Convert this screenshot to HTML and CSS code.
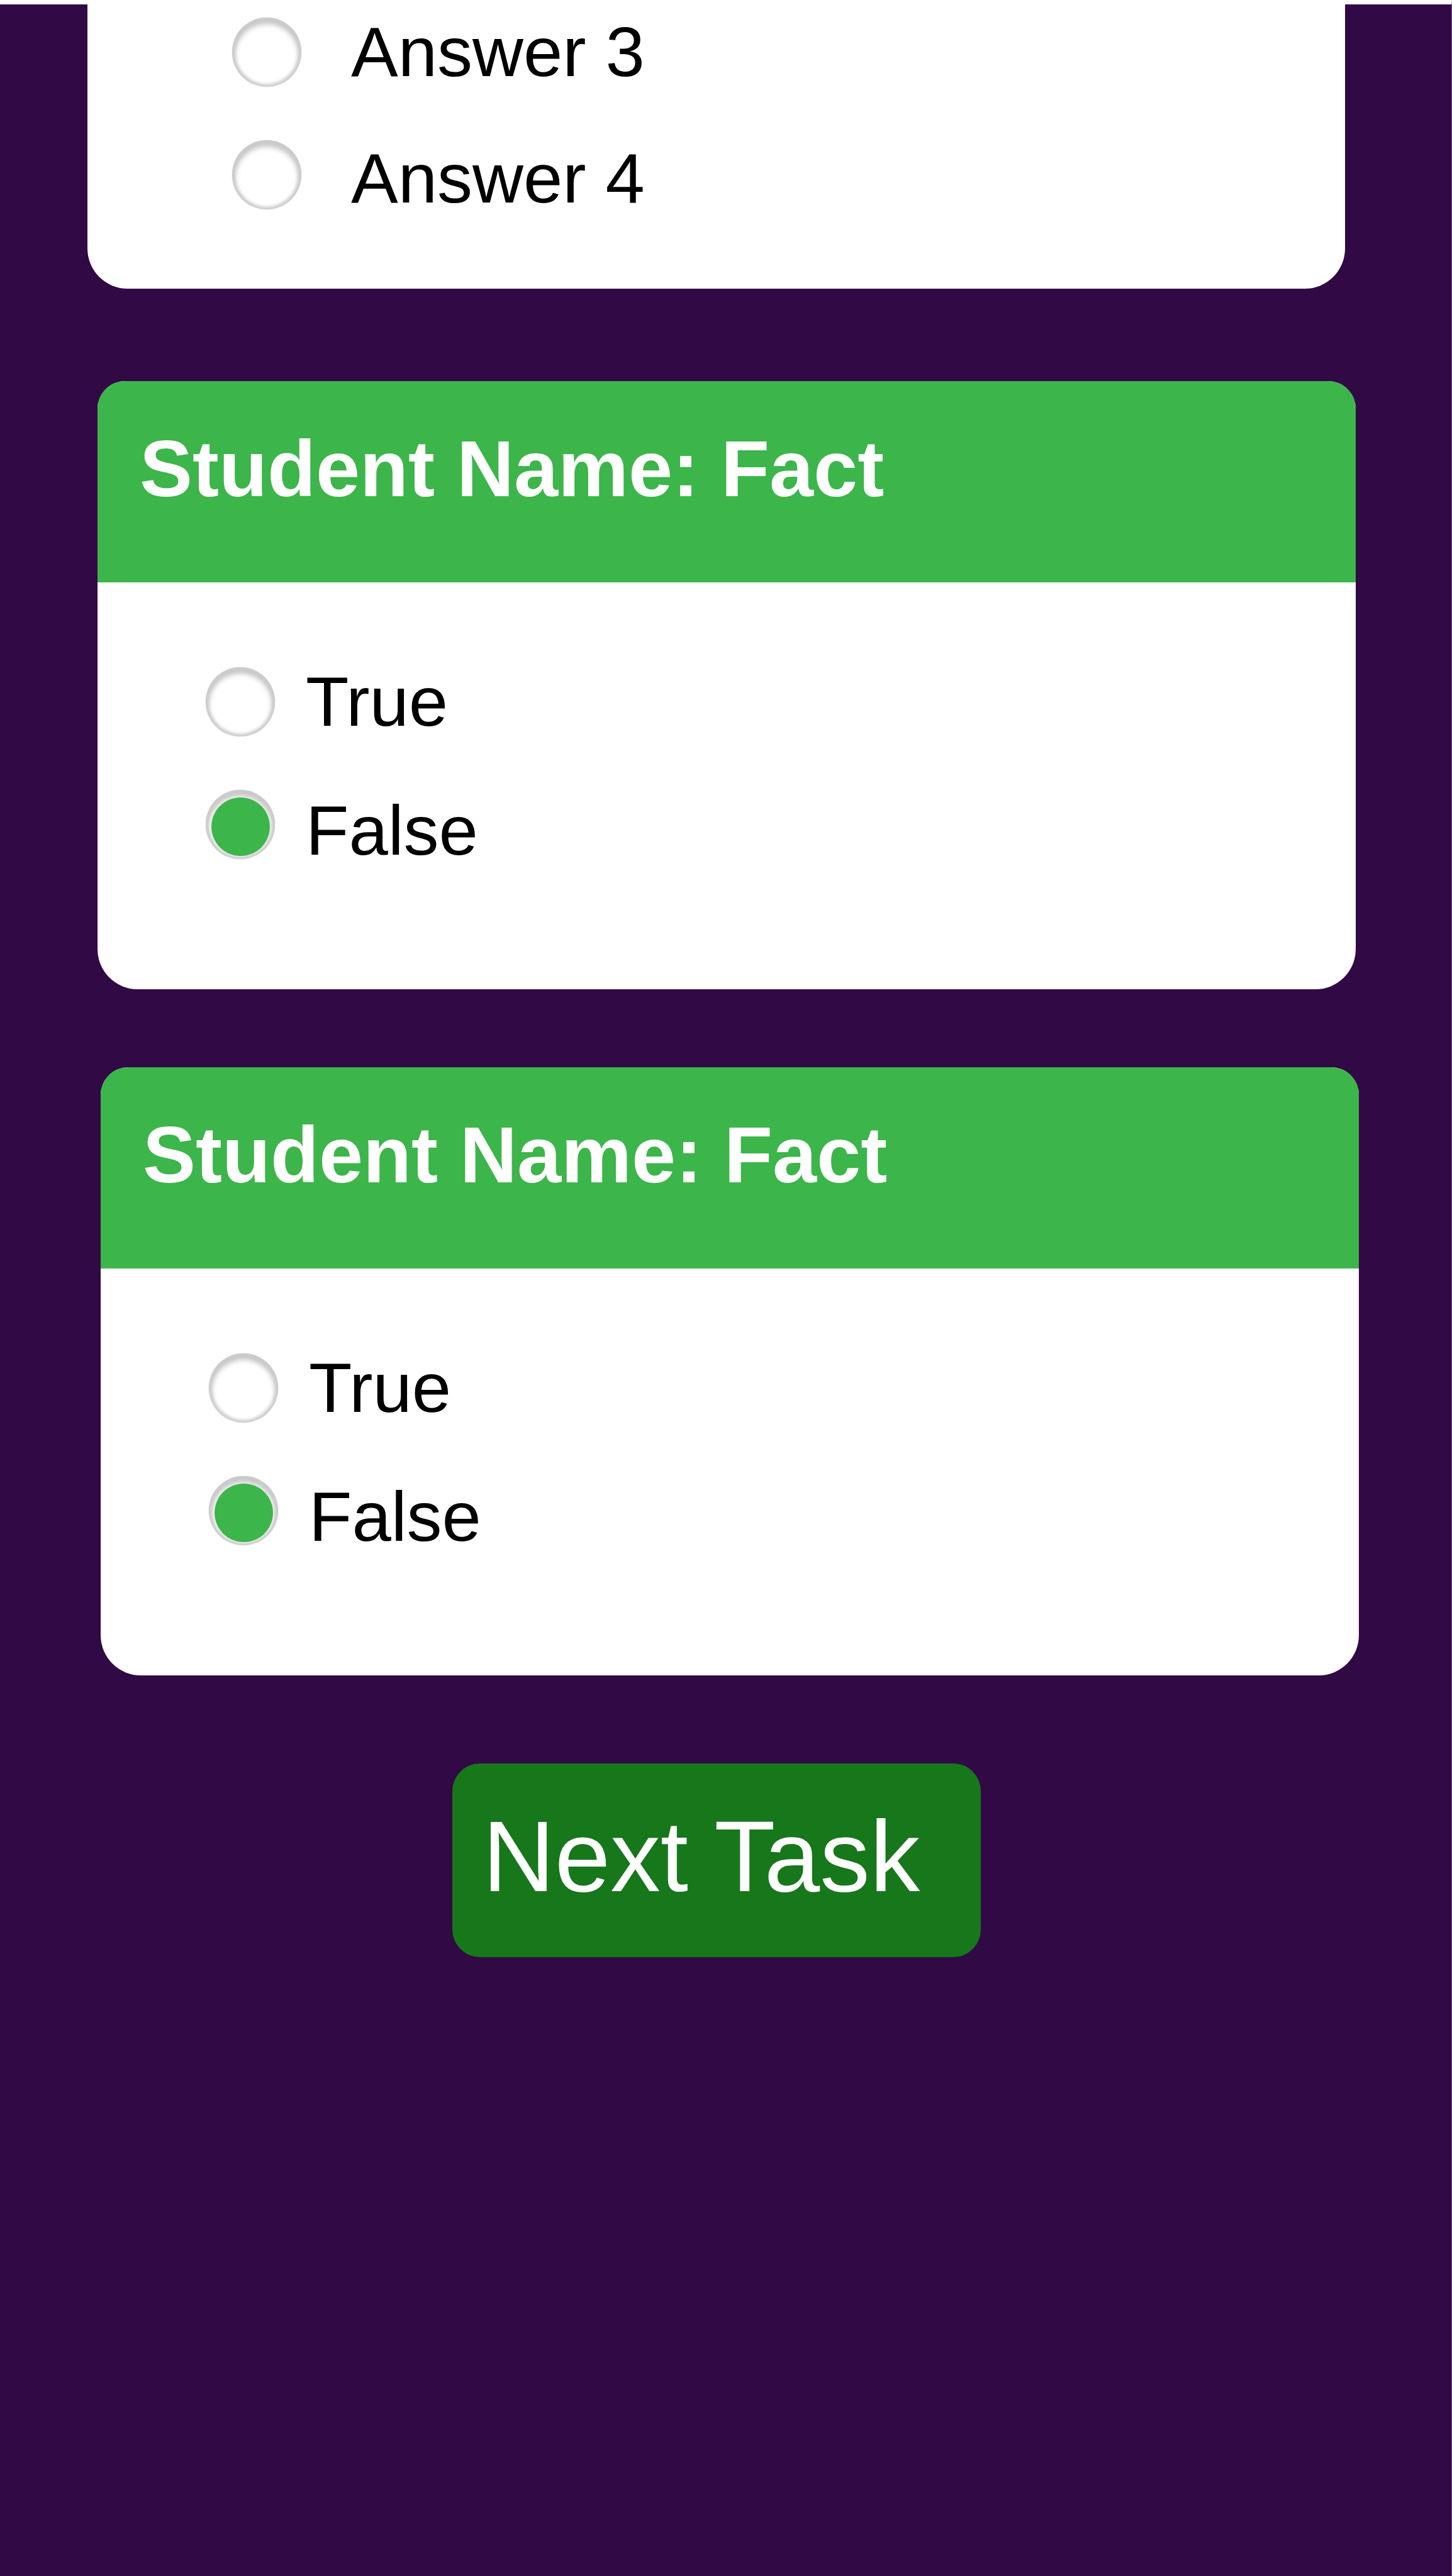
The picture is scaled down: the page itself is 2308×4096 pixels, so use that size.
FILE: index.html
```
<!DOCTYPE html>
<html lang="en">
<head>
<meta charset="utf-8">
<meta name="viewport" content="width=device-width, initial-scale=1">
<title>Student task</title>
<link rel="stylesheet" href="styles.css">
</head>
<body>
<main class="page">
  <section class="card card-answers">
    <div class="options options-answers">
      <label class="option"><input class="radio" type="radio" name="answer"><span class="option-text">Answer 3</span></label>
      <label class="option"><input class="radio" type="radio" name="answer"><span class="option-text">Answer 4</span></label>
    </div>
  </section>

  <section class="card card-fact">
    <h2 class="card-title">Student Name: Fact</h2>
    <div class="options">
      <label class="option"><input class="radio" type="radio" name="fact-1"><span class="option-text">True</span></label>
      <label class="option"><input class="radio" type="radio" name="fact-1" checked><span class="option-text">False</span></label>
    </div>
  </section>

  <section class="card card-fact card-last">
    <h2 class="card-title">Student Name: Fact</h2>
    <div class="options">
      <label class="option"><input class="radio" type="radio" name="fact-2"><span class="option-text">True</span></label>
      <label class="option"><input class="radio" type="radio" name="fact-2" checked><span class="option-text">False</span></label>
    </div>
  </section>

  <button class="next" type="button">Next Task</button>
</main>
</body>
</html>
```
FILE: styles.css
```
:root {
  --purple: #310944;
  --green: #3cb54a;
  --dark-green: #16771b;
}

* {
  box-sizing: border-box;
}

body {
  margin: 0;
  background: #fff;
  color: #000;
  font-family: "Liberation Sans", Arial, Helvetica, sans-serif;
}

.page {
  display: flex;
  flex-direction: column;
  min-height: 100vh;
  border-top: 7px solid #fff;
  border-right: 1px solid #765a82;
  background: var(--purple);
  background-clip: padding-box;
}

.card {
  overflow: hidden;
  border-radius: 44px 44px 64px 64px;
  background: #fff;
}

.card-answers {
  margin: 0 169px 147px 139px;
  border-radius: 0 0 64px 64px;
}

.card-fact {
  margin: 0 152px 124px 155px;
}

.card-last {
  margin: 0 147px 140px 160px;
}

.card-title {
  margin: 0;
  padding: 68px 67px 108px;
  background: var(--green);
  color: #fff;
  font-size: 126px;
  font-weight: 700;
  line-height: 144px;
}

.options {
  display: flex;
  flex-direction: column;
  gap: 83px;
  padding: 134px 171px 186px;
}

.options-answers {
  padding: 20px 229px 113px;
}

.option {
  display: flex;
  align-items: flex-start;
  gap: 48px;
  font-size: 112px;
  line-height: 112px;
}

.option:last-child {
  line-height: 132px;
}

.options-answers .option {
  gap: 78px;
}

.options-answers .option:last-child {
  line-height: 124px;
}

.radio {
  appearance: none;
  display: grid;
  flex: none;
  place-items: center;
  width: 110px;
  height: 110px;
  margin: 1px;
  padding-top: 6px;
  border-radius: 50%;
  background: #fff;
  box-shadow:
    0 0 2px #d8d8d8,
    inset 0 0 5px 4px #cccccc,
    inset 0 6px 8px 4px #c4c4c4;
}

.radio:checked::before {
  content: "";
  width: 93px;
  height: 93px;
  border-radius: 50%;
  background: var(--green);
}

.next {
  align-self: flex-start;
  width: 840px;
  margin: 0 0 0 719px;
  padding: 70px 48px 82px;
  border: 0;
  border-radius: 44px;
  background: var(--dark-green);
  color: #fff;
  font-family: inherit;
  font-size: 159px;
  line-height: 156px;
  text-align: left;
  white-space: nowrap;
}
```
